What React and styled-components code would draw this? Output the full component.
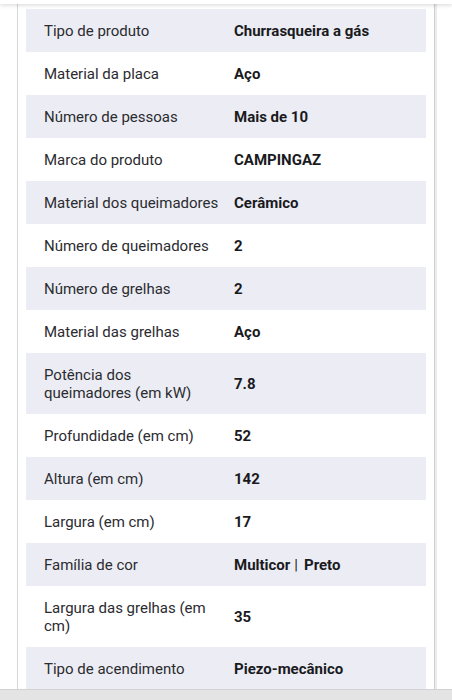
import React from "react";
import styled, { createGlobalStyle } from "styled-components";

const Global = createGlobalStyle`
  html, body { margin: 0; padding: 0; background: #ffffff; }
  body { font-family: Roboto, "Noto Sans", sans-serif; }
  #root { height: 700px; overflow: hidden; }
`;

const Page = styled.div`
  position: relative;
  height: 700px;
  display: flex;
  flex-direction: column;
  background: #fff;
  overflow: hidden;
`;

const TopShade = styled.div`
  position: absolute;
  top: 0;
  left: 0;
  right: 0;
  height: 4px;
  background: #fff;
  box-shadow: 0 1px 4px rgba(0, 0, 0, 0.18);
  z-index: 2;
`;

const Card = styled.div`
  flex: 1;
  margin: 0 17px 0 17px;
  border-left: 1px solid #d6d6d6;
  border-right: 1px solid #cfcfcf;
  box-shadow: 2px 0 0 #ececec;
  padding: 9px 8px 0 8px;
  overflow: hidden;
`;

const Table = styled.div`
  display: flex;
  flex-direction: column;
`;

const Row = styled.div`
  display: grid;
  grid-template-columns: 208px 1fr;
  align-items: center;
  min-height: 43px;
  padding: 12.5px 0;
  box-sizing: border-box;
  background: ${(p) => (p.$shaded ? "#ecedf4" : "#ffffff")};
`;

const Label = styled.div`
  padding-left: 18px;
  font-size: 15px;
  line-height: 18px;
  color: #2b2b30;
  white-space: pre;
`;

const Value = styled.div`
  font-size: 15px;
  line-height: 18px;
  font-weight: 700;
  color: #1a1a1e;
`;

const Sep = styled.span`
  font-weight: 400;
  margin: 0 6px 0 4px;
`;

const BottomBar = styled.div`
  position: absolute;
  left: 0;
  right: 0;
  bottom: 0;
  height: 10px;
  background: #e4e4e4;
  border-top: 1px solid #d2d2d2;
  z-index: 2;
`;

const rows = [
  ["Tipo de produto", "Churrasqueira a gás"],
  ["Material da placa", "Aço"],
  ["Número de pessoas", "Mais de 10"],
  ["Marca do produto", "CAMPINGAZ"],
  ["Material dos queimadores", "Cerâmico"],
  ["Número de queimadores", "2"],
  ["Número de grelhas", "2"],
  ["Material das grelhas", "Aço"],
  ["Potência dos\nqueimadores (em kW)", "7.8"],
  ["Profundidade (em cm)", "52"],
  ["Altura (em cm)", "142"],
  ["Largura (em cm)", "17"],
  ["Família de cor", ["Multicor", "Preto"]],
  ["Largura das grelhas (em\ncm)", "35"],
  ["Tipo de acendimento", "Piezo-mecânico"],
];

export default function App() {
  return (
    <>
      <Global />
      <Page>
        <TopShade />
        <Card>
          <Table>
            {rows.map(([label, value], i) => (
              <Row key={i} $shaded={i % 2 === 0}>
                <Label>{label}</Label>
                <Value>
                  {Array.isArray(value) ? (
                    <>
                      {value[0]}
                      <Sep>|</Sep>
                      {value[1]}
                    </>
                  ) : (
                    value
                  )}
                </Value>
              </Row>
            ))}
          </Table>
        </Card>
        <BottomBar />
      </Page>
    </>
  );
}
